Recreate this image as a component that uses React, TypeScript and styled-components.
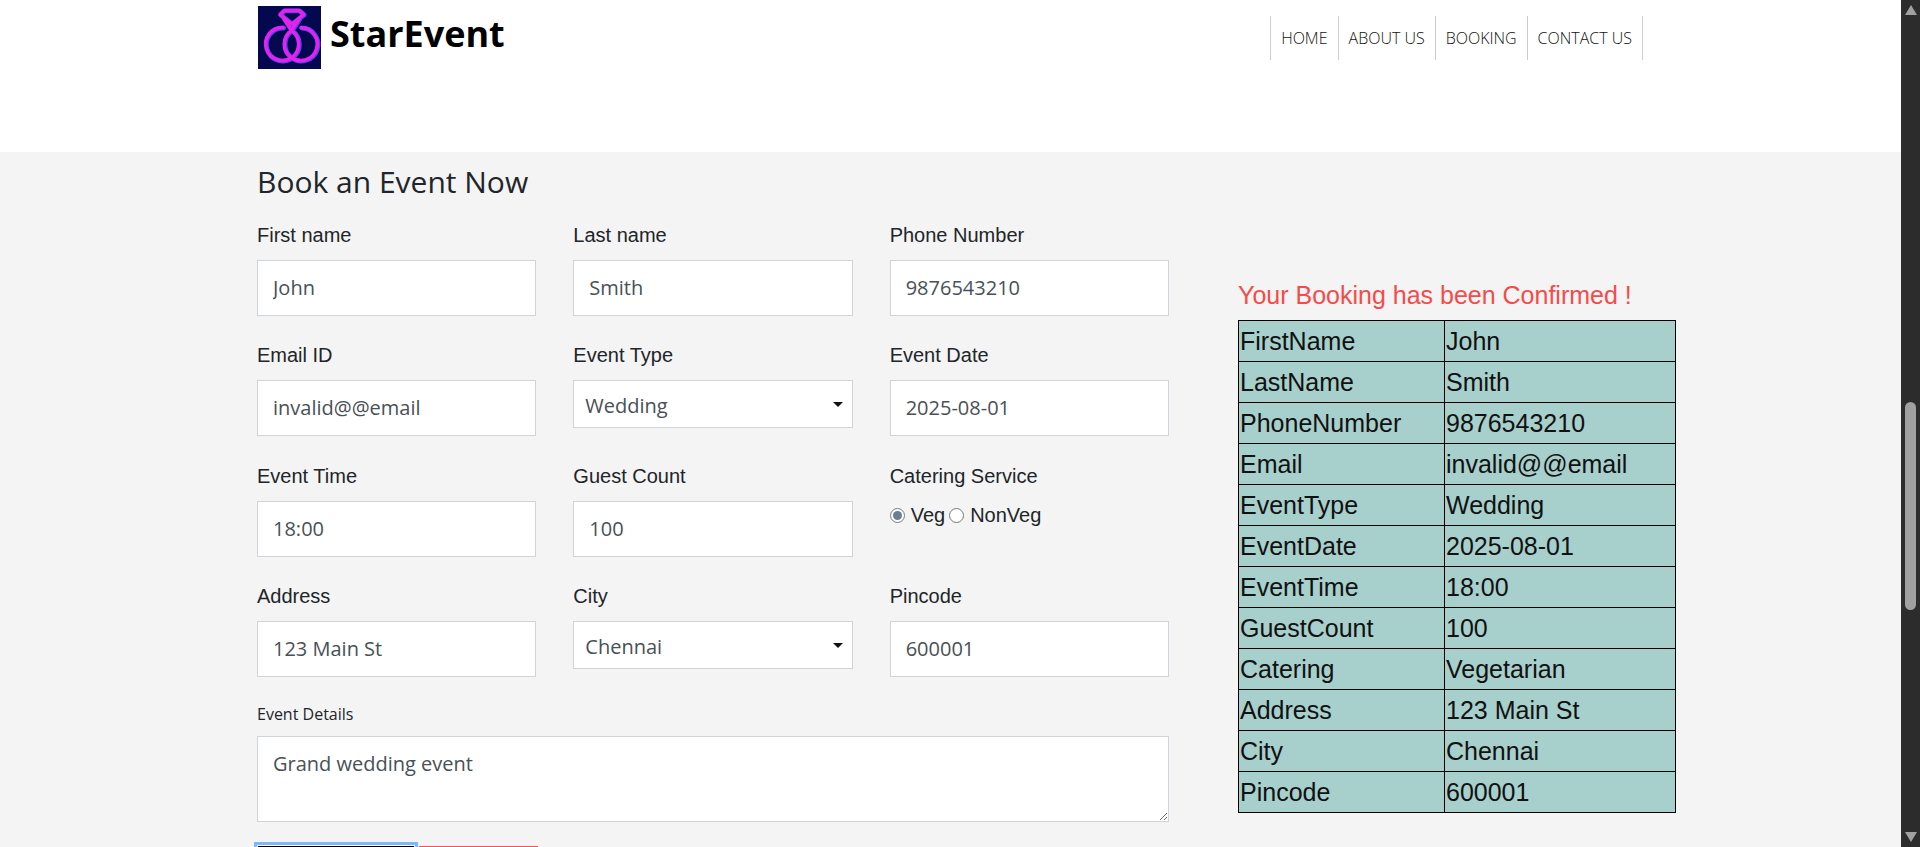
import React from "react";
import styled, { createGlobalStyle } from "styled-components";

const Global = createGlobalStyle`
  html, body { margin: 0; padding: 0; height: 847px; overflow: hidden; background: #f4f4f4; }
  * { box-sizing: border-box; }
`;

const Viewport = styled.div`
  display: flex;
  height: 847px;
  overflow: hidden;
`;
const Page = styled.div`
  flex: 1;
  min-width: 0;
  font-family: "Liberation Sans", Arial, sans-serif;
  color: #212529;
`;
const Header = styled.header`
  height: 152px;
  background: #fff;
  padding: 6px 258px 0 258px;
  display: flex;
  justify-content: space-between;
  align-items: flex-start;
`;
const Brand = styled.div`
  display: flex;
  align-items: flex-start;
  gap: 9px;
`;
const BrandName = styled.span`
  font-family: "Open Sans", sans-serif;
  font-weight: 700;
  font-size: 36px;
  line-height: 56px;
  color: #000;
`;
const Nav = styled.nav`
  display: flex;
  margin-top: 10px;
  border-right: 1px solid #ccc;
`;
const NavLink = styled.a`
  height: 44px;
  border-left: 1px solid #ccc;
  padding: 0 10px;
  font-family: "Open Sans", sans-serif;
  font-weight: 300;
  font-size: 16px;
  line-height: 44px;
  color: #111;
`;
const Content = styled.main`
  display: grid;
  grid-template-columns: 912px 437px;
  column-gap: 69px;
  padding-left: 257px;
`;
const Heading = styled.h2`
  margin: 10px 0 0;
  font-family: "Open Sans", sans-serif;
  font-weight: 400;
  font-size: 30px;
  line-height: 40px;
  color: #212529;
`;
const FormGrid = styled.div`
  display: grid;
  grid-template-columns: repeat(3, 1fr);
  column-gap: 37px;
  row-gap: 24.4px;
  margin-top: 18px;
`;
const Field = styled.div`
  display: flex;
  flex-direction: column;
  align-items: stretch;
`;
const Label = styled.label`
  font-size: 20px;
  line-height: 30px;
  margin-bottom: 10px;
`;
const controlText = `
  font-family: "Open Sans", sans-serif;
  font-size: 20px;
  color: #495057;
  background: #fff;
  border: 1px solid #ced4da;
  border-radius: 0;
  outline: none;
`;
const TextInput = styled.input`
  ${controlText}
  height: 56px;
  width: 100%;
  padding: 0 15px 1px;
`;
const SelectBox = styled.div`
  position: relative;
  &::after {
    content: "";
    position: absolute;
    top: 22px;
    right: 10px;
    border-left: 5px solid transparent;
    border-right: 5px solid transparent;
    border-top: 5px solid #111;
    pointer-events: none;
  }
`;
const Select = styled.select`
  ${controlText}
  appearance: none;
  display: block;
  height: 48px;
  width: 100%;
  padding: 2px 11px 0;
`;
const RadioRow = styled.div`
  display: flex;
  align-items: center;
  height: 30px;
  font-size: 20px;
`;
const Radio = styled.input`
  width: 15px;
  height: 15px;
  margin: 0 6px 0 0;
  accent-color: #6b7f8e;
`;
const RadioText = styled.span`
  margin-right: 4px;
`;
const DetailsLabel = styled.label`
  display: block;
  margin-top: 25px;
  margin-bottom: 10px;
  font-family: "Open Sans", sans-serif;
  font-size: 16px;
  line-height: 24px;
`;
const TextArea = styled.textarea`
  ${controlText}
  display: block;
  width: 100%;
  height: 86px;
  padding: 12px 15px;
  line-height: 30px;
`;
const Actions = styled.div`
  display: flex;
  align-items: flex-start;
  gap: 4px;
  margin-top: 23px;
`;
const SubmitButton = styled.button`
  width: 158px;
  height: 40px;
  background: #000;
  border: 1px solid #fff;
  box-shadow: 0 0 0 3px #7ab8ff;
`;
const ResetButton = styled.button`
  width: 119px;
  height: 40px;
  margin-top: 1px;
  background: #f4525a;
  border: 0;
`;
const Aside = styled.aside`
  padding-top: 128px;
`;
const Confirmation = styled.h3`
  margin: 0 0 10px;
  font-weight: 400;
  font-size: 25px;
  line-height: 30px;
  color: #f44b4b;
`;
const Summary = styled.table`
  width: 437px;
  table-layout: fixed;
  border-collapse: collapse;
  background: #a7cfcc;
  font-size: 25px;
  color: #111;
`;
const SummaryCell = styled.td<{ $wide?: boolean }>`
  width: ${(p) => (p.$wide ? "231px" : "206px")};
  height: 41px;
  padding: 0 1px;
  border: 1px solid #000;
  line-height: 40px;
  white-space: nowrap;
`;
const ScrollTrack = styled.div`
  position: relative;
  flex: 0 0 19px;
  display: flex;
  flex-direction: column;
  justify-content: space-between;
  align-items: center;
  padding: 5px 0 5px;
  background: #2c2c2c;
`;
const ScrollArrow = styled.span<{ $down?: boolean }>`
  width: 0;
  height: 0;
  border-left: 6.5px solid transparent;
  border-right: 6.5px solid transparent;
  ${(p) =>
    p.$down
      ? "border-top: 10px solid #a0a0a0;"
      : "border-bottom: 10px solid #a0a0a0;"}
`;
const ScrollThumb = styled.span`
  position: absolute;
  top: 402px;
  left: 4px;
  width: 11px;
  height: 208px;
  border-radius: 6px;
  background: #a0a0a0;
`;

const Logo = () => (
  <svg width="63" height="63" viewBox="0 0 63 63" style={{ display: "block" }}>
    <defs>
      <filter id="soft"><feGaussianBlur stdDeviation="0.4" /></filter>
    </defs>
    <rect width="63" height="63" fill="#03084f" />
    <g fill="none" filter="url(#soft)" strokeLinejoin="round" strokeLinecap="round">
      <g stroke="#5a3ff0" strokeWidth="4.8" transform="translate(0.7 0.4)">
        <path d="M41 13 L33.4 24.4 A16.5 16.5 0 1 1 25 21.6" />
        <path d="M26 13 L33.6 24.4 A16.5 16.5 0 1 0 43 21.6" />
        <path d="M22 8.5 L26 4.5 L41 4.5 L45.5 8.5 L33.7 18 Z" />
      </g>
      <g stroke="#e624ea" strokeWidth="3.4">
        <path d="M41 13 L33.4 24.4 A16.5 16.5 0 1 1 25 21.6" />
        <path d="M26 13 L33.6 24.4 A16.5 16.5 0 1 0 43 21.6" />
        <path d="M22 8.5 L26 4.5 L41 4.5 L45.5 8.5 L33.7 18 Z" />
      </g>
    </g>
  </svg>
);

const rows: [string, string][] = [
  ["FirstName", "John"],
  ["LastName", "Smith"],
  ["PhoneNumber", "9876543210"],
  ["Email", "invalid@@email"],
  ["EventType", "Wedding"],
  ["EventDate", "2025-08-01"],
  ["EventTime", "18:00"],
  ["GuestCount", "100"],
  ["Catering", "Vegetarian"],
  ["Address", "123 Main St"],
  ["City", "Chennai"],
  ["Pincode", "600001"],
];

const TextField = ({ label, value }: { label: string; value: string }) => (
  <Field>
    <Label>{label}</Label>
    <TextInput defaultValue={value} />
  </Field>
);
const SelectField = ({ label, value }: { label: string; value: string }) => (
  <Field>
    <Label>{label}</Label>
    <SelectBox>
      <Select defaultValue={value}>
        <option>{value}</option>
      </Select>
    </SelectBox>
  </Field>
);

export default function App() {
  return (
    <Viewport>
      <Global />
      <Page>
        <Header>
          <Brand>
            <Logo />
            <BrandName>StarEvent</BrandName>
          </Brand>
          <Nav>
            <NavLink>HOME</NavLink>
            <NavLink>ABOUT US</NavLink>
            <NavLink>BOOKING</NavLink>
            <NavLink>CONTACT US</NavLink>
          </Nav>
        </Header>
        <Content>
          <section>
            <Heading>Book an Event Now</Heading>
            <FormGrid>
              <TextField label="First name" value="John" />
              <TextField label="Last name" value="Smith" />
              <TextField label="Phone Number" value="9876543210" />
              <TextField label="Email ID" value="invalid@@email" />
              <SelectField label="Event Type" value="Wedding" />
              <TextField label="Event Date" value="2025-08-01" />
              <TextField label="Event Time" value="18:00" />
              <TextField label="Guest Count" value="100" />
              <Field>
                <Label>Catering Service</Label>
                <RadioRow>
                  <Radio type="radio" name="catering" defaultChecked />
                  <RadioText>Veg</RadioText>
                  <Radio type="radio" name="catering" />
                  <RadioText>NonVeg</RadioText>
                </RadioRow>
              </Field>
              <TextField label="Address" value="123 Main St" />
              <SelectField label="City" value="Chennai" />
              <TextField label="Pincode" value="600001" />
            </FormGrid>
            <DetailsLabel>Event Details</DetailsLabel>
            <TextArea defaultValue="Grand wedding event" />
            <Actions>
              <SubmitButton />
              <ResetButton />
            </Actions>
          </section>
          <Aside>
            <Confirmation>Your Booking has been Confirmed !</Confirmation>
            <Summary>
              <tbody>
                {rows.map(([k, v]) => (
                  <tr key={k}>
                    <SummaryCell>{k}</SummaryCell>
                    <SummaryCell $wide>{v}</SummaryCell>
                  </tr>
                ))}
              </tbody>
            </Summary>
          </Aside>
        </Content>
      </Page>
      <ScrollTrack>
        <ScrollArrow />
        <ScrollThumb />
        <ScrollArrow $down />
      </ScrollTrack>
    </Viewport>
  );
}
